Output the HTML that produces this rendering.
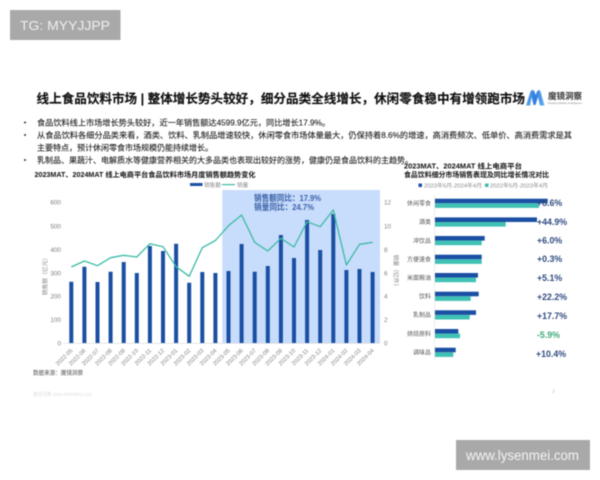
<!DOCTYPE html>
<html lang="zh">
<head>
<meta charset="utf-8">
<title>线上食品饮料市场</title>
<style>
html,body{margin:0;padding:0;background:#fff;width:600px;height:480px;overflow:hidden}
svg{display:block;position:absolute;left:0;top:0;filter:blur(.4px)}
text{font-family:"Liberation Sans","Noto Sans CJK SC",sans-serif}
.t{font-size:8.2px;fill:#222;stroke:#222;stroke-width:.12px}
.b{font-weight:700;fill:#111;font-size:7px}
.ax{font-size:6.4px;fill:#808080}
.xl{font-size:5.8px;fill:#808080;text-anchor:end}
.cat{font-size:6px;fill:#555;text-anchor:end}
.val{font-size:8.8px;font-weight:700;fill:#2f4b80}
</style>
</head>
<body>
<svg width="600" height="480" viewBox="0 0 600 480" xmlns="http://www.w3.org/2000/svg">
<defs>
<linearGradient id="m" x1="0" y1="0" x2="1" y2="0">
<stop offset="0" stop-color="#5aa5ee"/>
<stop offset=".5" stop-color="#2f7de1"/>
<stop offset="1" stop-color="#6cb0f0"/>
</linearGradient>
</defs>
<rect width="600" height="480" fill="#fff"/>
<rect x="10" y="10" width="110.5" height="30" fill="#a9a9a9"/>
<text x="20" y="30" font-size="13" fill="#f0f0f0" textLength="90" lengthAdjust="spacingAndGlyphs">TG: MYYJJPP</text>

<text x="36.5" y="103" font-size="12.5" font-weight="700" fill="#111" stroke="#111" stroke-width=".15" textLength="488.5" lengthAdjust="spacingAndGlyphs">线上食品饮料市场 | 整体增长势头较好，细分品类全线增长，休闲零食稳中有增领跑市场</text>

<path d="M526 105.5 L530.5 91.5 Q532.5 88.5 534.5 91.5 L535.5 95 L537 91.5 Q539 88.5 540.5 91.5 L544.5 105.5 L540 105.5 L538 97 L535.5 105 L533.5 105 L531.5 97 L530 105.5Z" fill="url(#m)"/>
<text x="548" y="99" font-size="8.4" font-weight="700" fill="#333" textLength="34" lengthAdjust="spacingAndGlyphs">魔镜洞察</text>
<text x="548" y="104" font-size="3" fill="#888" textLength="34" lengthAdjust="spacingAndGlyphs">Moojing Market Intelligence</text>

<circle cx="25" cy="122.5" r="1" fill="#333"/>
<circle cx="25" cy="135" r="1" fill="#333"/>
<circle cx="25" cy="160" r="1" fill="#333"/>
<text class="t" x="37" y="125.5" textLength="293" lengthAdjust="spacingAndGlyphs">食品饮料线上市场增长势头较好，近一年销售额达4599.9亿元，同比增长17.9%。</text>
<text class="t" x="37" y="138" textLength="535" lengthAdjust="spacingAndGlyphs">从食品饮料各细分品类来看，酒类、饮料、乳制品增速较快，休闲零食市场体量最大，仍保持着8.6%的增速，高消费频次、低单价、高消费需求是其</text>
<text class="t" x="37" y="150.5" textLength="176" lengthAdjust="spacingAndGlyphs">主要特点，预计休闲零食市场规模仍能持续增长。</text>
<text class="t" x="37" y="163" textLength="376" lengthAdjust="spacingAndGlyphs">乳制品、果蔬汁、电解质水等健康营养相关的大多品类也表现出较好的涨势，健康仍是食品饮料的主趋势。</text>

<text class="b" x="34.5" y="177" textLength="221" lengthAdjust="spacingAndGlyphs">2023MAT、2024MAT 线上电商平台食品饮料市场月度销售额趋势变化</text>
<text class="b" x="404" y="168.5" textLength="118" lengthAdjust="spacingAndGlyphs">2023MAT、2024MAT 线上电商平台</text>
<text class="b" x="404" y="177" textLength="145" lengthAdjust="spacingAndGlyphs">食品饮料细分市场销售表现及同比增长情况对比</text>

<!-- left legend -->
<rect x="190" y="183" width="12.5" height="3" fill="#1a4fa3"/>
<text x="204" y="187" font-size="5.6" fill="#888">销售额</text>
<rect x="222" y="184" width="13" height="1.2" fill="#3dbba6"/>
<text x="237" y="187" font-size="5.6" fill="#888">销量</text>

<!-- highlight -->
<rect x="222.3" y="190" width="157.7" height="153" fill="#c8dcfb"/>

<!-- axes labels -->
<g class="ax" text-anchor="end">
<text x="61" y="204.5">600</text>
<text x="61" y="228.5">500</text>
<text x="61" y="252">400</text>
<text x="61" y="275.5">300</text>
<text x="61" y="298.5">200</text>
<text x="61" y="322">100</text>
<text x="61" y="345.5">0</text>
</g>
<g class="ax">
<text x="384" y="204.5">12</text>
<text x="384" y="228.5">10</text>
<text x="384" y="252">8</text>
<text x="384" y="275.5">6</text>
<text x="384" y="298.5">4</text>
<text x="384" y="322">2</text>
<text x="384" y="345.5">0</text>
</g>
<text transform="rotate(-90 47 275)" x="47" y="275" font-size="5.8" fill="#888" text-anchor="middle">销售额（亿元）</text>
<text transform="rotate(90 394 272)" x="394" y="272" font-size="5.8" fill="#888" text-anchor="middle">销量（亿件）</text>

<line x1="64" y1="343.3" x2="380" y2="343.3" stroke="#d8d8d8" stroke-width=".6"/>

<!-- bars -->
<path fill="none" stroke="#1a4fa3" stroke-width="4" d="M71.3 281.7V343M84.4 266.7V343M97.5 282V343M110.6 271.7V343M123.7 262V343M136.8 273V343M149.9 246V343M163 251V343M176.1 243.7V343M189.2 282.7V343M202.3 272V343M215.4 273V343M228.5 271V343M241.6 244V343M254.7 271.7V343M267.8 266V343M280.9 235V343M294 258V343M307.1 220V343M320.2 250V343M333.3 214V343M346.4 270V343M359.5 269V343M372.6 272V343"/>

<!-- line -->
<polyline fill="none" stroke="#3dbba6" stroke-width="1.3" stroke-linejoin="round" points="71.3,267 84.4,261 97.5,265.7 110.6,257.7 123.7,255.3 136.8,257 149.9,243.7 163,246.7 176.1,266.7 189.2,276.3 202.3,247.7 215.4,240.5 228.5,225.7 241.6,215 254.7,242.3 267.8,251 280.9,238.3 294,247 307.1,221.7 320.2,226.7 333.3,210 346.4,265 359.5,244.3 372.6,242.3"/>

<text x="254" y="201" font-size="8.4" font-weight="700" fill="#3a62a8" textLength="67" lengthAdjust="spacingAndGlyphs">销售额同比：17.9%</text>
<text x="254" y="210" font-size="8.4" font-weight="700" fill="#3a62a8" textLength="60" lengthAdjust="spacingAndGlyphs">销量同比：24.7%</text>

<!-- x labels -->
<text class="xl" transform="rotate(-45 73 351)" x="73" y="351">2022-05</text>
<text class="xl" transform="rotate(-45 86.1 351)" x="86.1" y="351">2022-06</text>
<text class="xl" transform="rotate(-45 99.2 351)" x="99.2" y="351">2022-07</text>
<text class="xl" transform="rotate(-45 112.3 351)" x="112.3" y="351">2022-08</text>
<text class="xl" transform="rotate(-45 125.4 351)" x="125.4" y="351">2022-09</text>
<text class="xl" transform="rotate(-45 138.5 351)" x="138.5" y="351">2022-10</text>
<text class="xl" transform="rotate(-45 151.6 351)" x="151.6" y="351">2022-11</text>
<text class="xl" transform="rotate(-45 164.7 351)" x="164.7" y="351">2022-12</text>
<text class="xl" transform="rotate(-45 177.8 351)" x="177.8" y="351">2023-01</text>
<text class="xl" transform="rotate(-45 190.9 351)" x="190.9" y="351">2023-02</text>
<text class="xl" transform="rotate(-45 204 351)" x="204" y="351">2023-03</text>
<text class="xl" transform="rotate(-45 217.1 351)" x="217.1" y="351">2023-04</text>
<text class="xl" transform="rotate(-45 230.2 351)" x="230.2" y="351">2023-05</text>
<text class="xl" transform="rotate(-45 243.3 351)" x="243.3" y="351">2023-06</text>
<text class="xl" transform="rotate(-45 256.4 351)" x="256.4" y="351">2023-07</text>
<text class="xl" transform="rotate(-45 269.5 351)" x="269.5" y="351">2023-08</text>
<text class="xl" transform="rotate(-45 282.6 351)" x="282.6" y="351">2023-09</text>
<text class="xl" transform="rotate(-45 295.7 351)" x="295.7" y="351">2023-10</text>
<text class="xl" transform="rotate(-45 308.8 351)" x="308.8" y="351">2023-11</text>
<text class="xl" transform="rotate(-45 321.9 351)" x="321.9" y="351">2023-12</text>
<text class="xl" transform="rotate(-45 335 351)" x="335" y="351">2024-01</text>
<text class="xl" transform="rotate(-45 348.1 351)" x="348.1" y="351">2024-02</text>
<text class="xl" transform="rotate(-45 361.2 351)" x="361.2" y="351">2024-03</text>
<text class="xl" transform="rotate(-45 374.3 351)" x="374.3" y="351">2024-04</text>

<text x="33" y="375" font-size="6.2" fill="#555" textLength="50" lengthAdjust="spacingAndGlyphs">数据来源：魔镜洞察</text>
<text x="33" y="396" font-size="5" fill="#e2e2e2" textLength="59" lengthAdjust="spacingAndGlyphs">魔镜洞察 www.mktindex.com</text>
<text x="552" y="393" font-size="5" fill="#c8c8c8">3</text>

<!-- right legend -->
<rect x="418.5" y="183.5" width="3.5" height="3.5" fill="#1a4fa3"/>
<text x="424" y="187.5" font-size="5.6" fill="#888" textLength="58" lengthAdjust="spacingAndGlyphs">2023年5月-2024年4月</text>
<rect x="485" y="183.5" width="3.5" height="3.5" fill="#3dbba6"/>
<text x="490" y="187.5" font-size="5.6" fill="#888" textLength="58" lengthAdjust="spacingAndGlyphs">2022年5月-2023年4月</text>

<!-- right chart -->
<line x1="434.7" y1="195" x2="434.7" y2="361" stroke="#e2e2e2" stroke-width=".6"/>
<g fill="#1a4fa3">
<rect x="435" y="198.7" width="112.7" height="4.6"/>
<rect x="435" y="217.4" width="102" height="4.6"/>
<rect x="435" y="236" width="49.7" height="4.6"/>
<rect x="435" y="254.7" width="46.7" height="4.6"/>
<rect x="435" y="273" width="43" height="4.6"/>
<rect x="435" y="291.7" width="43.7" height="4.6"/>
<rect x="435" y="310.3" width="41" height="4.6"/>
<rect x="435" y="329" width="23.3" height="4.6"/>
<rect x="435" y="347.7" width="20.7" height="4.6"/>
</g>
<g fill="#3fc1b4">
<rect x="435" y="203.3" width="104" height="4.6"/>
<rect x="435" y="222" width="70.7" height="4.6"/>
<rect x="435" y="240.6" width="46.7" height="4.6"/>
<rect x="435" y="259.3" width="46.7" height="4.6"/>
<rect x="435" y="277.6" width="41" height="4.6"/>
<rect x="435" y="296.3" width="35.7" height="4.6"/>
<rect x="435" y="314.9" width="34.7" height="4.6"/>
<rect x="435" y="333.6" width="25" height="4.6"/>
<rect x="435" y="352.3" width="18.3" height="4.6"/>
</g>
<text class="cat" x="431" y="205.5">休闲零食</text>
<text class="cat" x="431" y="224">酒类</text>
<text class="cat" x="431" y="243">冲饮品</text>
<text class="cat" x="431" y="261.5">方便速食</text>
<text class="cat" x="431" y="280">米面粮油</text>
<text class="cat" x="431" y="298.5">饮料</text>
<text class="cat" x="431" y="317">乳制品</text>
<text class="cat" x="431" y="336">烘焙原料</text>
<text class="cat" x="431" y="354.5">调味品</text>

<text class="val" x="537" y="206">+8.6%</text>
<text class="val" x="537" y="225">+44.9%</text>
<text class="val" x="537" y="243.5">+6.0%</text>
<text class="val" x="537" y="262">+0.3%</text>
<text class="val" x="537" y="281">+5.1%</text>
<text class="val" x="537" y="300">+22.2%</text>
<text class="val" x="537" y="319">+17.7%</text>
<text class="val" x="537" y="338" style="fill:#3fa878">-5.9%</text>
<text class="val" x="536" y="357">+10.4%</text>

<rect x="456" y="440" width="134" height="30" fill="#a9a9a9"/>
<text x="466" y="460" font-size="13.5" fill="#f4f4f4" textLength="113" lengthAdjust="spacingAndGlyphs">www.lysenmei.com</text>
</svg>
</body>
</html>
